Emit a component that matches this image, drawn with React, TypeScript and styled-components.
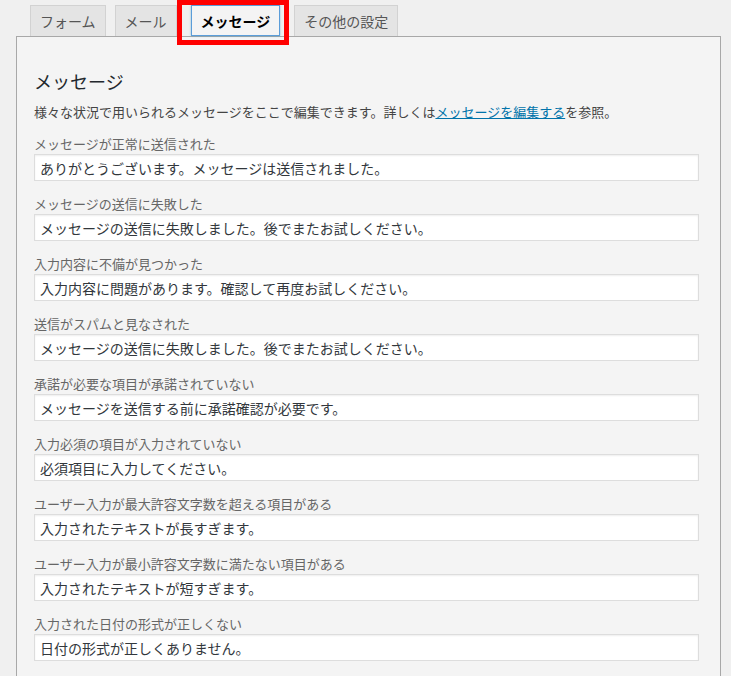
import React from "react";
import styled, { createGlobalStyle } from "styled-components";

const Global = createGlobalStyle`
  html, body { margin: 0; padding: 0; background: #f0f0f0; }
  body { font-family: "Noto Sans CJK JP", "Noto Sans", sans-serif; color: #444; }
  * { box-sizing: border-box; }
`;

const Page = styled.div`
  padding: 5px 10px 0 16px;
  height: 676px;
  overflow: hidden;
`;

const TabBar = styled.div`
  display: flex;
  align-items: flex-end;
  padding-left: 14px;
  gap: 9px;
`;

const Tab = styled.div<{ $active?: boolean }>`
  position: relative;
  height: 31px;
  display: flex;
  align-items: center;
  padding: 0 9px;
  font-size: 14px;
  white-space: nowrap;
  border: 1px solid ${(p) => (p.$active ? "#5b9dd9" : "#d2d2d2")};
  border-bottom: ${(p) => (p.$active ? "1px solid #5b9dd9" : "none")};
  background: ${(p) => (p.$active ? "#f4f4f4" : "#e4e4e4")};
  color: ${(p) => (p.$active ? "#000" : "#555")};
  font-weight: ${(p) => (p.$active ? 700 : 400)};
  margin: ${(p) => (p.$active ? "0 5px" : "0")};
  box-shadow: ${(p) => (p.$active ? "0 0 2px rgba(30,140,190,.5)" : "none")};
`;

const Highlight = styled.span`
  position: absolute;
  top: -6px;
  left: -15px;
  right: -10px;
  bottom: -10px;
  border: 5px solid #ff0000;
  pointer-events: none;
`;

const Panel = styled.div`
  border: 1px solid #a8a8a8;
  border-bottom: none;
  background: #f4f4f4;
  padding: 31px 21px 0 17px;
  min-height: 700px;
`;

const Heading = styled.h2`
  margin: 0;
  font-size: 18px;
  font-weight: 400;
  line-height: 26px;
  color: #23282d;
`;

const Description = styled.p`
  margin: 8px 0 13px;
  font-size: 13px;
  line-height: 20px;
  color: #444;
`;

const Link = styled.a`
  color: #0073aa;
  text-decoration: underline;
`;

const Field = styled.div`
  display: flex;
  flex-direction: column;
  gap: 1px;
  margin-bottom: 14px;
`;

const Label = styled.label`
  font-size: 13px;
  line-height: 18px;
  color: #666;
`;

const Input = styled.input`
  width: 665px;
  height: 27px;
  border: 1px solid #dddddd;
  box-shadow: inset 0 1px 2px rgba(0, 0, 0, 0.07);
  background: #fff;
  padding: 0 5px;
  font-family: "Noto Sans CJK JP", "Noto Sans", sans-serif;
  font-size: 14px;
  color: #32373c;
  outline: none;
`;

const tabs = ["フォーム", "メール", "メッセージ", "その他の設定"];

const fields: [string, string][] = [
  ["メッセージが正常に送信された", "ありがとうございます。メッセージは送信されました。"],
  ["メッセージの送信に失敗した", "メッセージの送信に失敗しました。後でまたお試しください。"],
  ["入力内容に不備が見つかった", "入力内容に問題があります。確認して再度お試しください。"],
  ["送信がスパムと見なされた", "メッセージの送信に失敗しました。後でまたお試しください。"],
  ["承諾が必要な項目が承諾されていない", "メッセージを送信する前に承諾確認が必要です。"],
  ["入力必須の項目が入力されていない", "必須項目に入力してください。"],
  ["ユーザー入力が最大許容文字数を超える項目がある", "入力されたテキストが長すぎます。"],
  ["ユーザー入力が最小許容文字数に満たない項目がある", "入力されたテキストが短すぎます。"],
  ["入力された日付の形式が正しくない", "日付の形式が正しくありません。"],
];

export default function App() {
  return (
    <>
      <Global />
      <Page>
        <TabBar>
          {tabs.map((t) => (
            <Tab key={t} $active={t === "メッセージ"}>
              {t}
              {t === "メッセージ" && <Highlight />}
            </Tab>
          ))}
        </TabBar>
        <Panel>
          <Heading>メッセージ</Heading>
          <Description>
            様々な状況で用いられるメッセージをここで編集できます。詳しくは
            <Link href="#">メッセージを編集する</Link>を参照。
          </Description>
          {fields.map(([label, value], i) => (
            <Field key={i}>
              <Label>{label}</Label>
              <Input defaultValue={value} readOnly />
            </Field>
          ))}
        </Panel>
      </Page>
    </>
  );
}
